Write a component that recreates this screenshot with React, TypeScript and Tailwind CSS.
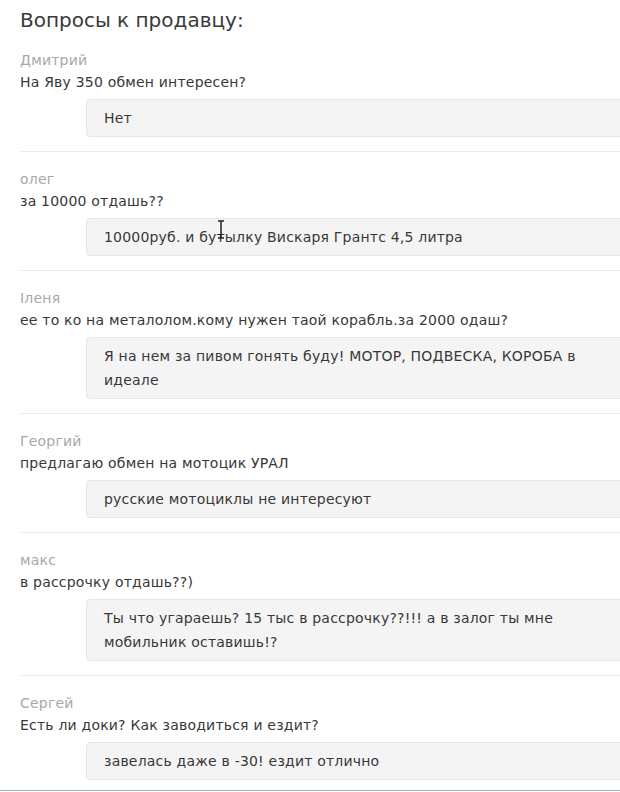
const items = [
  {
    name: "Дмитрий",
    question: "На Яву 350 обмен интересен?",
    answer: "Нет",
  },
  {
    name: "олег",
    question: "за 10000 отдашь??",
    answer: "10000руб. и бутылку Вискаря Грантс 4,5 литра",
    cursor: true,
  },
  {
    name: "Іленя",
    question: "ее то ко на металолом.кому нужен таой корабль.за 2000 одаш?",
    answer: "Я на нем за пивом гонять буду! МОТОР, ПОДВЕСКА, КОРОБА в идеале",
  },
  {
    name: "Георгий",
    question: "предлагаю обмен на мотоцик УРАЛ",
    answer: "русские мотоциклы не интересуют",
  },
  {
    name: "макс",
    question: "в рассрочку отдашь??)",
    answer: "Ты что угараешь? 15 тыс в рассрочку??!!! а в залог ты мне мобильник оставишь!?",
  },
  {
    name: "Сергей",
    question: "Есть ли доки? Как заводиться и ездит?",
    answer: "завелась даже в -30! ездит отлично",
  },
];

export default function App() {
  return (
    <main className="w-[620px] h-[792px] overflow-hidden bg-white text-[#383838] font-['DejaVu_Sans',sans-serif] relative">
      <div className="pl-[20px]">
        <h1 className="pt-[7px] text-[20px] leading-[26px] text-[#3a3a3a]">
          Вопросы к продавцу:
        </h1>

        {items.map((item, i) => (
          <div key={i} className={i < items.length - 1 ? "border-b border-[#ececec]" : ""}>
            <div className="pt-[16px] text-[14px] tracking-[0.2px] leading-[22px] text-[#a8a8a8]">
              {item.name}
            </div>
            <div className="text-[14px] tracking-[0.2px] leading-[22px]">
              {item.question}
            </div>
            <div className="relative mt-[6px] mb-[14px] ml-[66px] mr-[-12px] rounded-l-[4px] border border-[#e6e6e6] bg-[#f4f4f4] pl-[17px] pr-[30px] py-[6px] text-[14px] tracking-[0.2px] leading-[24px]">
              {item.answer}
              {item.cursor && (
                <svg
                  className="absolute left-[130px] top-[1px]"
                  width="8"
                  height="19"
                  viewBox="0 0 8 19"
                >
                  <path d="M1 1h6M4 1v17M1 18h6" stroke="#222" strokeWidth="1.5" fill="none" />
                </svg>
              )}
            </div>
          </div>
        ))}
      </div>
      <div className="absolute left-0 right-0 bottom-[1px] h-[1px] bg-[#a9b0b4]" />
    </main>
  );
}
